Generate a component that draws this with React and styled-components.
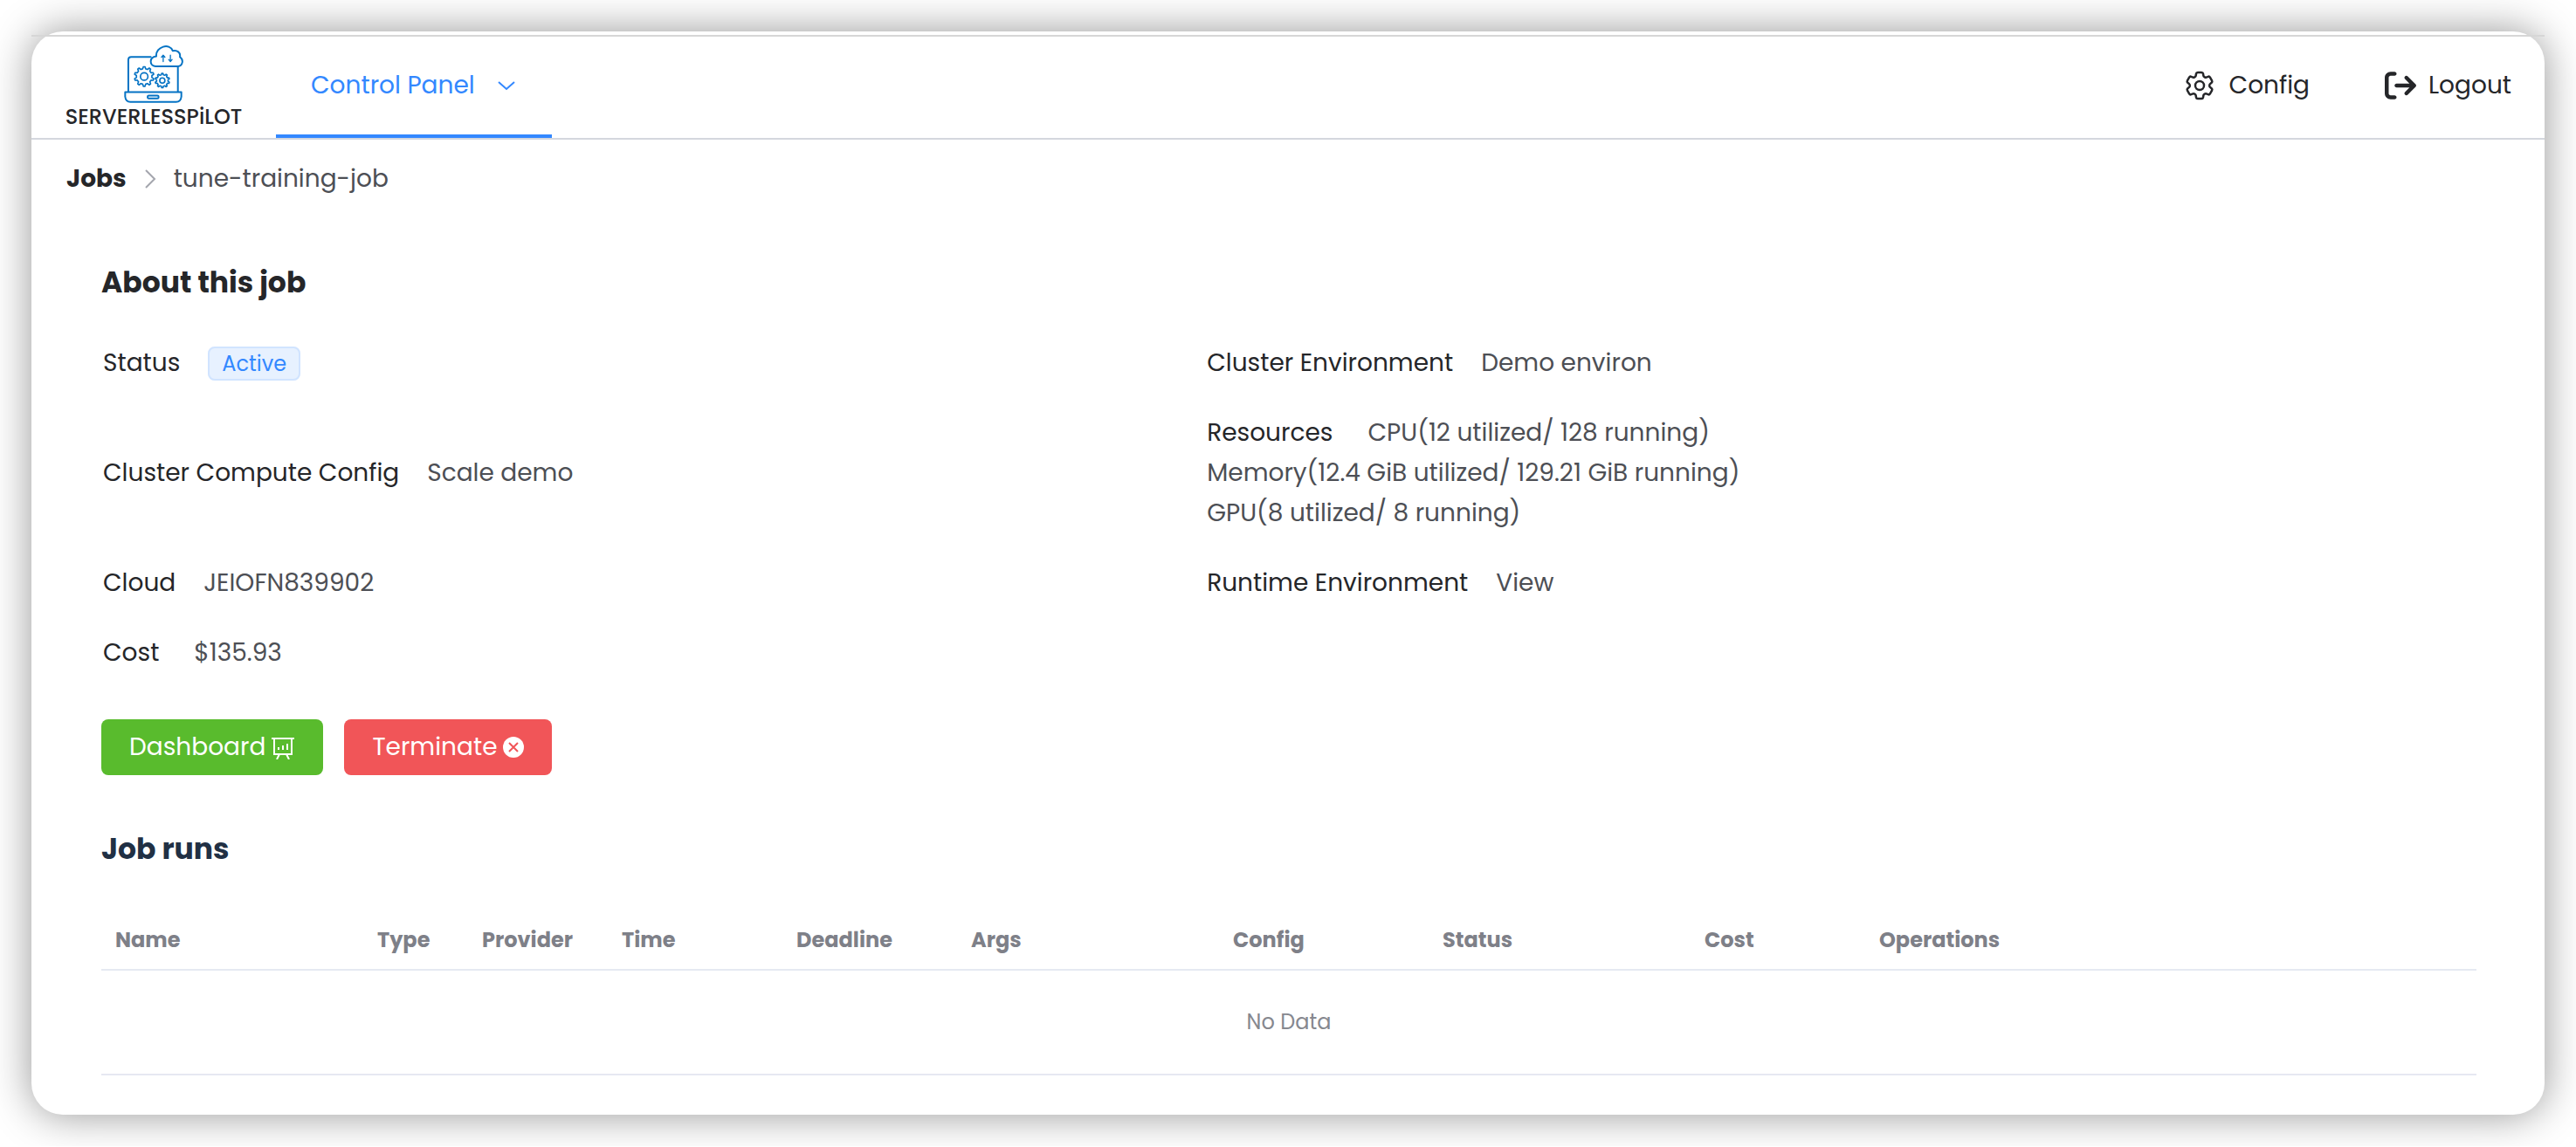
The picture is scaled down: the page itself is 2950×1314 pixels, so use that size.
import React from "react";
import styled, { createGlobalStyle } from "styled-components";
import { HiOutlineCog6Tooth } from "react-icons/hi2";
import { FaArrowRightFromBracket } from "react-icons/fa6";

const ink = "#252629";
const body = "#4d4f55";
const muted = "#7e8088";
const blue = "#3388ff";
const rule = "#e5e9f2";

const GlobalStyle = createGlobalStyle`
  *, *::before, *::after { box-sizing: border-box; }
  body {
    margin: 0;
    background: #fff;
    color: ${ink};
    font-family: Poppins, Inter, "Open Sans", sans-serif;
    font-size: 28px;
    line-height: 46px;
  }
`;

const Window = styled.div`
  margin: 36px;
  padding-top: 4px;
  border-radius: 36px;
  background: #fff;
  box-shadow: 0 0 48px rgba(0, 0, 0, 0.42);
`;

const Header = styled.header`
  display: flex;
  height: 120px;
  padding: 0 38px 0 40px;
  border-top: 2px solid #d6d6d6;
  border-bottom: 2px solid #d4d7de;
`;

const Brand = styled.a`
  display: flex;
  flex-direction: column;
  align-items: center;
  gap: 4px;
  width: 200px;
  padding-top: 10px;
  margin-right: 40px;
  color: ${ink};
  text-decoration: none;
`;

const BrandName = styled.span`
  font-size: 24px;
  font-weight: 500;
  line-height: 24px;
  white-space: nowrap;
`;

const Nav = styled.nav`
  display: flex;
  flex: 1;
`;

const Tab = styled.button`
  display: flex;
  align-items: center;
  gap: 24px;
  padding: 0 40px;
  border: 0;
  border-bottom: 4px solid ${blue};
  background: none;
  color: ${blue};
  font: inherit;
`;

const Actions = styled.div`
  display: flex;
  align-items: center;
  gap: 86px;
  padding-bottom: 4px;
`;

const Action = styled.button`
  display: flex;
  align-items: center;
  gap: 14px;
  padding: 0;
  border: 0;
  background: none;
  color: ${ink};
  font: inherit;
`;

const Breadcrumb = styled.nav`
  display: flex;
  align-items: center;
  gap: 20px;
  padding: 22px 40px 18px;
  color: ${body};
`;

const CrumbLink = styled.a`
  color: ${ink};
  font-weight: 700;
  text-decoration: none;
`;

const Content = styled.main`
  padding: 54px 78px 45px 80px;
`;

const Title = styled.h2`
  margin: 0;
  color: ${(p) => p.$color || ink};
  font-size: 33px;
  font-weight: 700;
  line-height: 48px;
`;

const Details = styled.dl`
  display: grid;
  grid-template-columns: 20fr 23fr;
  align-items: center;
  row-gap: 34px;
  margin: 45px 0 53px;
  padding-left: 2px;
`;

const Detail = styled.div`
  grid-column: ${(p) => p.$column};
`;

const Term = styled.dt`
  display: inline;
  margin-right: ${(p) => (p.$wide ? 40 : 32)}px;
`;

const Value = styled.dd`
  display: inline;
  margin: 0;
  color: ${body};

  & + & {
    display: block;
  }
`;

const Tag = styled.span`
  padding: 1px 14px;
  border: 2px solid #d1e4ff;
  border-radius: 8px;
  background: #e7f1ff;
  color: ${blue};
  font-size: 24px;
  line-height: 34px;
`;

const ButtonRow = styled.div`
  display: flex;
  gap: 24px;
  margin-bottom: 61px;
`;

const Button = styled.button`
  display: flex;
  align-items: center;
  gap: 6px;
  height: 64px;
  padding: 0 32px;
  border: 0;
  border-radius: 8px;
  background: ${(p) => p.$color};
  color: #fff;
  font: inherit;
`;

const Table = styled.table`
  width: 100%;
  margin-top: 47px;
  border-collapse: separate;
  border-spacing: 0;
  table-layout: fixed;
  color: ${muted};
  font-size: 24px;
  line-height: 34px;
`;

const HeadCell = styled.th`
  padding: 16px;
  border-bottom: 2px solid ${rule};
  font-weight: 700;
  text-align: left;
`;

const EmptyCell = styled.td`
  height: 120px;
  padding: 0;
  border-bottom: 2px solid #e6e8f2;
  color: #86888f;
  text-align: center;
`;

function gearPath(cx, cy, outer, inner, teeth) {
  const step = (Math.PI * 2) / teeth;
  const points = [];
  for (let i = 0; i < teeth; i += 1) {
    const mid = i * step - Math.PI / 2;
    [
      [-0.3, inner],
      [-0.14, outer],
      [0.14, outer],
      [0.3, inner],
    ].forEach(([offset, r]) => {
      const a = mid + offset * step;
      points.push(`${(cx + r * Math.cos(a)).toFixed(1)} ${(cy + r * Math.sin(a)).toFixed(1)}`);
    });
  }
  return `M${points.join("L")}Z`;
}

function LogoMark() {
  return (
    <svg
      width="70"
      height="66"
      viewBox="37 20 210 200"
      fill="none"
      stroke="#0573c4"
      strokeWidth="6"
      strokeLinejoin="round"
      strokeLinecap="round"
      aria-hidden="true"
    >
      <path d="M132 60H64Q54 60 54 70V181M226 94V181" />
      <path d="M43 182H238V198Q236 216 220 216H61Q45 216 43 198Z" />
      <rect x="121" y="194" width="38" height="10" rx="4" />
      <path d="M148 93C127 91 125 61 151 58C148 24 198 10 208 39C223 35 236 45 233 60C247 70 243 91 226 93Z" />
      <path d="M175 76V56M169 61L175 54L181 61M200 54V74M194 69L200 76L206 69" strokeWidth="4" />
      <path d={gearPath(109, 128, 34, 27, 10)} strokeWidth="5" />
      <circle cx="109" cy="128" r="13" strokeWidth="5" />
      <path d={gearPath(172, 142, 25, 20, 10)} strokeWidth="5" />
      <circle cx="172" cy="142" r="9" strokeWidth="5" />
    </svg>
  );
}

function ChevronDown() {
  return (
    <svg width="24" height="24" viewBox="0 0 24 24" fill="none" stroke="currentColor" strokeWidth="2" aria-hidden="true">
      <path d="M3 8L12 16L21 8" />
    </svg>
  );
}

function ChevronRight() {
  return (
    <svg width="14" height="24" viewBox="0 0 14 24" fill="none" stroke="#a4a6ae" strokeWidth="2" aria-hidden="true">
      <path d="M2 2L12 12L2 22" />
    </svg>
  );
}

function BoardIcon() {
  return (
    <svg width="28" height="28" viewBox="0 0 28 28" fill="none" stroke="#fff" strokeWidth="2" aria-hidden="true">
      <path d="M1 4H27M4 4V22H24V4M10 22L7 28M18 22L21 28M9 14V17M14 12V17M19 10V17" />
    </svg>
  );
}

function CloseIcon() {
  return (
    <svg width="24" height="24" viewBox="0 0 24 24" aria-hidden="true">
      <circle cx="12" cy="12" r="12" fill="#fff" />
      <path d="M7 7L17 17M17 7L7 17" stroke="#f15558" strokeWidth="2" />
    </svg>
  );
}

const details = [
  { column: 1, term: "Status", values: [<Tag key="tag">Active</Tag>] },
  { column: 2, term: "Cluster Environment", values: ["Demo environ"] },
  { column: 1, term: "Cluster Compute Config", values: ["Scale demo"] },
  {
    column: 2,
    term: "Resources",
    wide: true,
    values: [
      "CPU(12 utilized/ 128 running)",
      "Memory(12.4 GiB utilized/ 129.21 GiB running)",
      "GPU(8 utilized/ 8 running)",
    ],
  },
  { column: 1, term: "Cloud", values: ["JEIOFN839902"] },
  { column: 2, term: "Runtime Environment", values: ["View"] },
  { column: 1, term: "Cost", wide: true, values: ["$135.93"] },
];

const columns = [
  ["Name", 300],
  ["Type", 120],
  ["Provider", 160],
  ["Time", 200],
  ["Deadline", 200],
  ["Args", 300],
  ["Config", 240],
  ["Status", 300],
  ["Cost", 200],
  ["Operations"],
];

export default function App() {
  return (
    <>
      <GlobalStyle />
      <Window>
        <Header>
          <Brand href="#">
            <LogoMark />
            <BrandName>SERVERLESSPiLOT</BrandName>
          </Brand>
          <Nav>
            <Tab type="button">
              <span>Control Panel</span>
              <ChevronDown />
            </Tab>
          </Nav>
          <Actions>
            <Action type="button">
              <HiOutlineCog6Tooth size={40} />
              <span>Config</span>
            </Action>
            <Action type="button">
              <FaArrowRightFromBracket size={36} />
              <span>Logout</span>
            </Action>
          </Actions>
        </Header>
        <Breadcrumb aria-label="Breadcrumb">
          <CrumbLink href="#">Jobs</CrumbLink>
          <ChevronRight />
          <span>tune-training-job</span>
        </Breadcrumb>
        <Content>
          <Title>About this job</Title>
          <Details>
            {details.map((d) => (
              <Detail key={d.term} $column={d.column}>
                <Term $wide={d.wide}>{d.term}</Term>
                {d.values.map((value, i) => (
                  <Value key={i}>{value}</Value>
                ))}
              </Detail>
            ))}
          </Details>
          <ButtonRow>
            <Button type="button" $color="#59bb2d">
              Dashboard <BoardIcon />
            </Button>
            <Button type="button" $color="#f15558">
              Terminate <CloseIcon />
            </Button>
          </ButtonRow>
          <Title $color="#213044">Job runs</Title>
          <Table>
            <colgroup>
              {columns.map(([name, width]) => (
                <col key={name} width={width} />
              ))}
            </colgroup>
            <thead>
              <tr>
                {columns.map(([name]) => (
                  <HeadCell key={name} scope="col">
                    {name}
                  </HeadCell>
                ))}
              </tr>
            </thead>
            <tbody>
              <tr>
                <EmptyCell colSpan={columns.length}>No Data</EmptyCell>
              </tr>
            </tbody>
          </Table>
        </Content>
      </Window>
    </>
  );
}
